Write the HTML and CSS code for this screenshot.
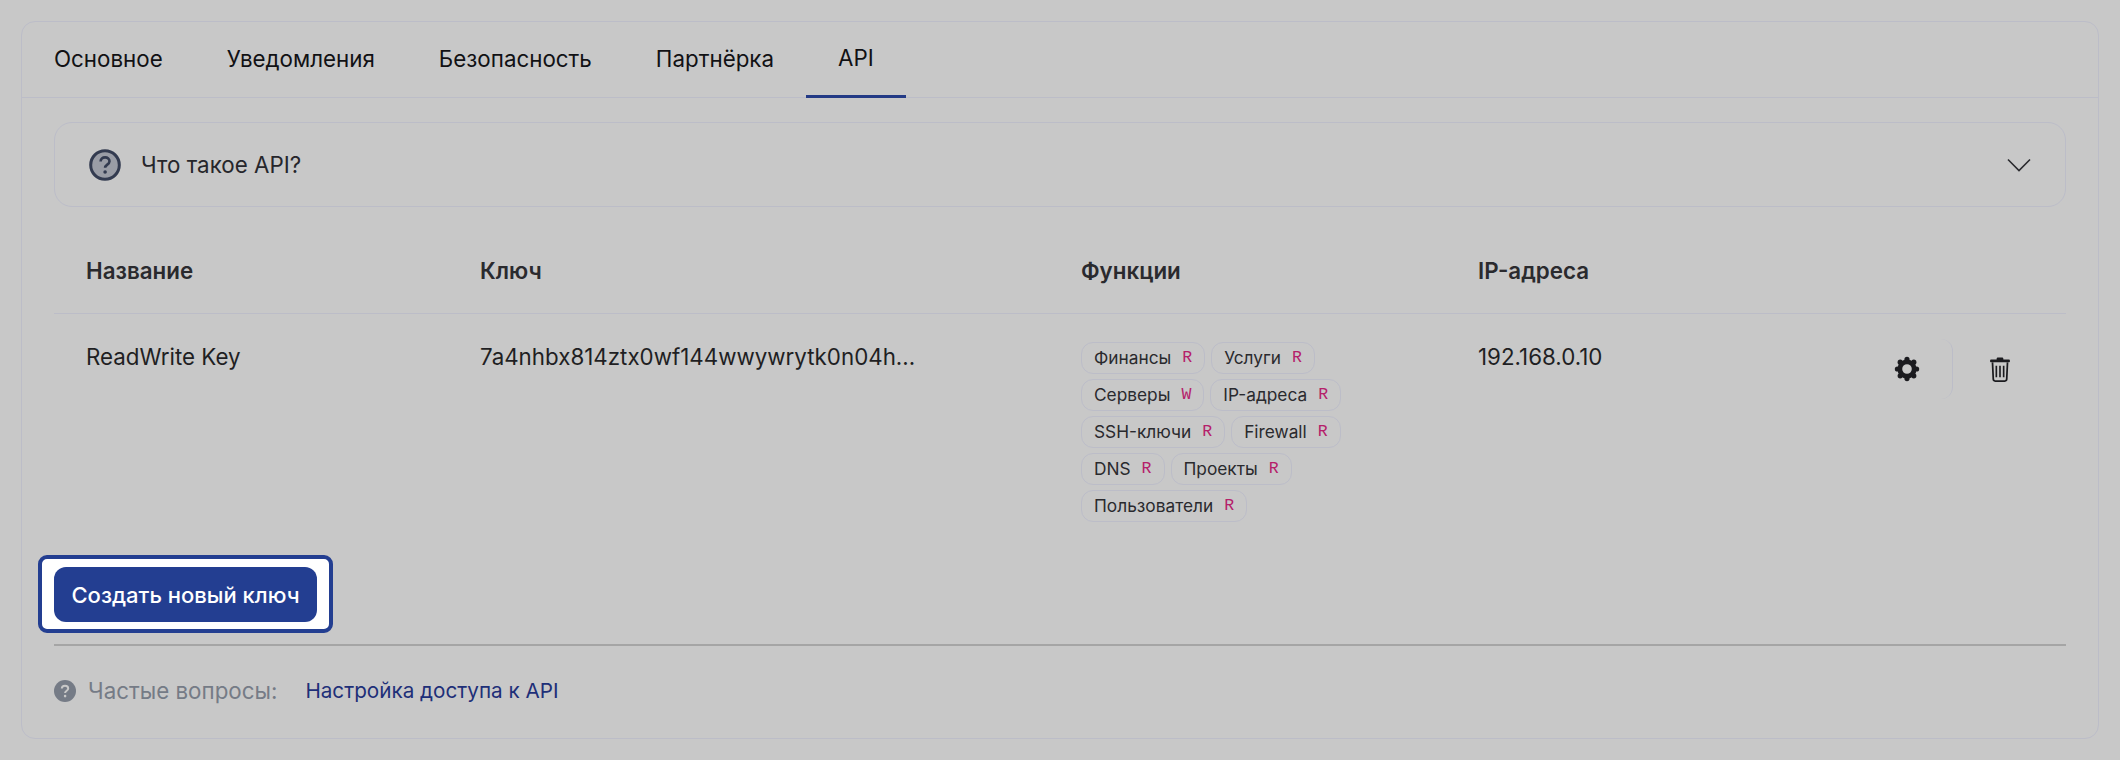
FILE: index.html
```html
<!DOCTYPE html>
<html lang="ru">
<head>
<meta charset="utf-8">
<title>API</title>
<link rel="stylesheet" href="styles.css">
</head>
<body>
<main class="card">
  <nav class="tabs">
    <a class="tab">Основное</a>
    <a class="tab">Уведомления</a>
    <a class="tab">Безопасность</a>
    <a class="tab">Партнёрка</a>
    <a class="tab tab-active">API</a>
  </nav>
  <div class="content">
    <section class="accordion">
      <svg class="q-icon" viewBox="0 0 32 32">
        <circle cx="16" cy="16" r="14.3" fill="#9a9da6" stroke="#333b50" stroke-width="3"/>
        <path d="M11.6 12.6c0-2.6 2-4.2 4.5-4.2s4.4 1.5 4.4 3.8c0 3.4-4.4 3.4-4.4 6.6" fill="none" stroke="#333b50" stroke-width="2.6"/>
        <circle cx="16.1" cy="23" r="1.8" fill="#333b50"/>
      </svg>
      <span class="accordion-title">Что такое API?</span>
      <svg class="chevron" viewBox="0 0 24 14">
        <path d="M1 1.5 12 12.5 23 1.5" fill="none" stroke="#2a2a2e" stroke-width="1.6"/>
      </svg>
    </section>
    <div class="table">
      <div class="row head">
        <div>Название</div>
        <div>Ключ</div>
        <div>Функции</div>
        <div>IP-адреса</div>
        <div></div>
      </div>
      <div class="row body-row">
        <div>ReadWrite Key</div>
        <div>7a4nhbx814ztx0wf144wwywrytk0n04h...</div>
        <div class="chips">
          <span class="chip">Финансы<b>R</b></span>
          <span class="chip">Услуги<b>R</b></span>
          <span class="chip">Серверы<b>W</b></span>
          <span class="chip">IP-адреса<b>R</b></span>
          <span class="chip">SSH-ключи<b>R</b></span>
          <span class="chip">Firewall<b>R</b></span>
          <span class="chip">DNS<b>R</b></span>
          <span class="chip">Проекты<b>R</b></span>
          <span class="chip">Пользователи<b>R</b></span>
        </div>
        <div>192.168.0.10</div>
        <div class="actions">
          <button class="icon-btn icon-btn-first" aria-label="Настройки">
            <svg class="gear" viewBox="0 0 26 26">
              <g fill="#1b1b1f">
                <circle cx="13" cy="3.4" r="2.6"/><circle cx="13" cy="22.6" r="2.6"/>
                <circle cx="3.4" cy="13" r="2.6"/><circle cx="22.6" cy="13" r="2.6"/>
                <circle cx="6.2" cy="6.2" r="2.6"/><circle cx="19.8" cy="6.2" r="2.6"/>
                <circle cx="6.2" cy="19.8" r="2.6"/><circle cx="19.8" cy="19.8" r="2.6"/>
              </g>
              <circle cx="13" cy="13" r="7.2" fill="none" stroke="#1b1b1f" stroke-width="4.8"/>
            </svg>
          </button>
          <button class="icon-btn" aria-label="Удалить">
            <svg class="trash" viewBox="0 0 22 26">
              <path d="M7.5 2.6V2c0-.9.7-1.4 1.5-1.4h4c.8 0 1.5.5 1.5 1.4v.6h5.6c.7 0 1.2.6 1.2 1.3v.9c0 .4-.3.7-.7.7H1.4c-.4 0-.7-.3-.7-.7v-.9c0-.7.5-1.3 1.2-1.3z" fill="#1b1b1f"/>
              <path d="M3.2 5.6 4 23c0 1.2.8 2 2 2h10c1.2 0 2-.8 2-2l.8-17.4" fill="none" stroke="#1b1b1f" stroke-width="1.8"/>
              <path d="M7.2 9v12M11 9v12M14.8 9v12" fill="none" stroke="#1b1b1f" stroke-width="1.7"/>
            </svg>
          </button>
        </div>
      </div>
    </div>
    <div class="spotlight">
      <button class="primary">Создать новый ключ</button>
    </div>
    <footer class="faq">
      <svg class="faq-icon" viewBox="0 0 22 22">
        <circle cx="11" cy="11" r="11" fill="#757b86"/>
        <path d="M7.8 8.6c0-1.8 1.4-2.9 3.2-2.9s3.2 1.1 3.2 2.7c0 2.3-3.1 2.3-3.1 4.6" fill="none" stroke="#c8c8c8" stroke-width="2"/>
        <circle cx="11.1" cy="16.1" r="1.3" fill="#c8c8c8"/>
      </svg>
      <span class="faq-label">Частые вопросы:</span>
      <a class="faq-link">Настройка доступа к API</a>
    </footer>
  </div>
</main>
</body>
</html>
```
FILE: styles.css
```css
* { box-sizing: border-box; }

html, body { height: 100%; }

body {
  margin: 0;
  padding: 21px 21px 0;
  background: #c8c8c8;
  color: #1d1d21;
  font-family: Inter, "Liberation Sans", sans-serif;
  font-size: 22.35px;
  line-height: 28px;
  overflow: hidden;
}

.card {
  border: 1px solid #bcbdc8;
  border-radius: 14px;
  height: 718px;
}

.tabs {
  display: flex;
  height: 76px;
  border-bottom: 1px solid #bcbdc8;
}

.tab {
  display: flex;
  align-items: center;
  padding: 0 32px 2px;
  margin-bottom: -1px;
  color: #111114;
}

.tab-active { border-bottom: 3px solid #233a85; }

.content { padding: 24px 32px 0; }

.accordion {
  display: flex;
  align-items: center;
  height: 85px;
  padding: 0 32px 0 34px;
  border: 1px solid #bcbdc8;
  border-radius: 18px;
}

.q-icon { width: 32px; height: 32px; flex: none; }

.accordion-title { margin-left: 20px; color: #26262b; }

.chevron { width: 24px; height: 14px; margin-left: auto; margin-right: 2px; }

.row {
  display: grid;
  grid-template-columns: 394px 601px 397px 1fr 218px;
  padding: 0 32px;
}

.head {
  height: 107px;
  padding-top: 50px;
  border-bottom: 1px solid #bcbdc8;
  font-weight: 600;
  color: #2a2a2e;
}

.body-row { padding-top: 29px; color: #1f1f23; }

.chips {
  display: flex;
  flex-wrap: wrap;
  gap: 5px 6px;
  align-content: flex-start;
  margin-top: -1px;
  max-width: 290px;
}

.chip {
  display: inline-flex;
  align-items: center;
  height: 32px;
  padding: 0 12px;
  border: 1px solid #bcbdc8;
  border-radius: 12px;
  font-size: 17.3px;
  line-height: 20px;
  color: #2a2a2e;
}

.chip b {
  margin-left: 11px;
  font-family: "Liberation Mono", monospace;
  font-weight: 400;
  font-size: 16.5px;
  color: #b5206a;
}

.actions {
  display: flex;
  justify-content: flex-end;
  align-items: flex-start;
  margin: -4px -12px 0 0;
}

.icon-btn {
  display: flex;
  align-items: center;
  justify-content: center;
  flex: none;
  width: 93px;
  height: 60px;
  padding: 0 0 0 1px;
  background: none;
  border: 0;
}

.icon-btn-first {
  border-right: 1px solid #bcbdc8;
  border-radius: 0 12px 12px 0;
}

.gear { width: 26px; height: 26px; }

.trash { width: 22px; height: 25px; }

.spotlight {
  display: inline-block;
  margin: 33px 0 0 -16px;
  padding: 8px 12px 7px;
  background: #fff;
  border: 4px solid #233e91;
  border-radius: 9px;
}

.primary {
  display: block;
  width: 263px;
  height: 55px;
  padding: 0;
  background: #233e91;
  border: 0;
  border-radius: 12px;
  color: #fff;
  font: 500 22px/28px Inter, "Liberation Sans", sans-serif;
}

.faq {
  display: flex;
  align-items: center;
  margin-top: 11px;
  height: 70px;
  border-top: 2px solid #a5a5a5;
  padding-top: 22px;
}

.faq-icon { width: 22px; height: 22px; flex: none; }

.faq-label { margin-left: 12px; color: #757b86; }

.faq-link { margin-left: 28px; font-size: 20.7px; color: #1e2f78; }
```
